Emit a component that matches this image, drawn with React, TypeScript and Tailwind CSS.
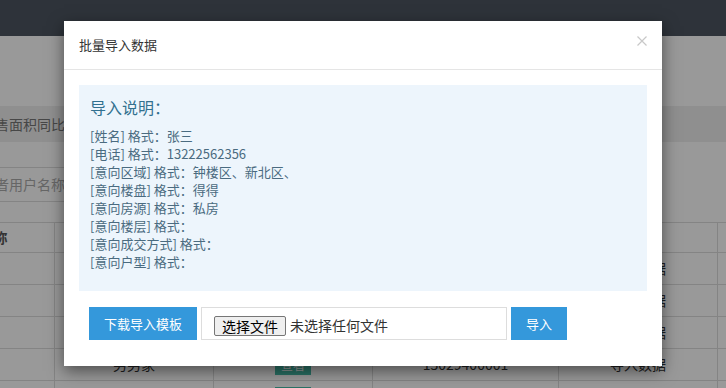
import React from 'react';

const rules = [
  '[姓名] 格式：张三',
  '[电话] 格式：13222562356',
  '[意向区域] 格式：钟楼区、新北区、',
  '[意向楼盘] 格式：得得',
  '[意向房源] 格式：私房',
  '[意向楼层] 格式：',
  '[意向成交方式] 格式：',
  '[意向户型] 格式：',
];

const headers = ['用户名称', '真实姓名', '头像', '手机号', '来源', '操作'];

const rows = [
  { name: '张三', real: '李四', phone: '13222562356', from: '导入数据' },
  { name: '王五', real: '赵六', phone: '13800000001', from: '导入数据' },
  { name: '小明', real: '刘备', phone: '13900000002', from: '导入数据' },
  { name: '家家', real: '男男家', phone: '15029400001', from: '导入数据' },
  { name: '陈七', real: '周八', phone: '15029400002', from: '导入数据' },
];

const widths = ['w-[150px]', 'w-[159px]', 'w-[159px]', 'w-[186px]', 'w-[159px]', 'w-[120px]'];

function PageBehind() {
  return (
    <div className="flex flex-col">
      <header className="h-[36px] bg-[#4e5562]" />
      <div className="h-[70px]" />
      <div className="h-[36px] bg-[#eeeeee] flex items-center">
        <span className="-ml-[19px] text-[14px] text-[#777]">销售面积同比分析</span>
      </div>
      <div className="h-[80px] pt-[25px]">
        <div className="-ml-[88px] w-[330px] h-[35px] border border-[#ddd] flex items-center pl-[12px] text-[14px] text-[#aaa]">
          请输入推荐者用户名称
        </div>
      </div>
      <div className="-ml-[95px] flex flex-col">
        <div className="flex h-[30px] border-t border-[#ddd]">
          {headers.map((h, i) => (
            <div key={h} className={`${widths[i]} shrink-0 border-r border-[#ddd] flex items-center justify-center text-[14px] font-bold text-[#555]`}>
              {h}
            </div>
          ))}
        </div>
        {rows.map((r) => (
          <div key={r.phone} className="flex h-[32px] border-t border-[#ddd] text-[14px] text-[#333]">
            <div className={`${widths[0]} shrink-0 border-r border-[#ddd] flex items-center justify-center`}>{r.name}</div>
            <div className={`${widths[1]} shrink-0 border-r border-[#ddd] flex items-center justify-center`}>{r.real}</div>
            <div className={`${widths[2]} shrink-0 border-r border-[#ddd] flex items-center justify-center`}>
              <span className="h-[20px] px-[6px] bg-[#47bda9] text-white text-[12px] leading-[20px]">查看</span>
            </div>
            <div className={`${widths[3]} shrink-0 border-r border-[#ddd] flex items-center justify-center`}>{r.phone}</div>
            <div className={`${widths[4]} shrink-0 border-r border-[#ddd] flex items-center justify-center`}>{r.from}</div>
            <div className={`${widths[5]} shrink-0 border-r border-[#ddd]`} />
          </div>
        ))}
      </div>
    </div>
  );
}

function ImportModal() {
  return (
    <div className="absolute left-[64px] top-[21px] w-[598px] bg-white shadow-[0_5px_15px_rgba(0,0,0,0.5)]">
      <div className="h-[49px] border-b border-[#e5e5e5] px-[15px] flex items-center justify-between">
        <h4 className="text-[13px] text-[#333]">批量导入数据</h4>
        <button className="mb-[8px] text-[#c8c8c8]" aria-label="关闭">
          <svg width="10" height="10" viewBox="0 0 10 10" fill="none" stroke="currentColor" strokeWidth="1.2">
            <path d="M0.5 0.5L9.5 9.5M9.5 0.5L0.5 9.5" />
          </svg>
        </button>
      </div>
      <div className="px-[15px] pt-[15px] pb-[26px]">
        <div className="bg-[#edf5fc] pt-[11px] pb-[20px] px-[11px]">
          <h3 className="text-[16px] leading-[22px] text-[#31708f]">导入说明：</h3>
          <ul className="mt-[9px] text-[13px] leading-[18px] text-[#4a6b80]">
            {rules.map((t) => (
              <li key={t}>{t}</li>
            ))}
          </ul>
        </div>
        <div className="mt-[16px] pl-[10px] flex items-center gap-[4px]">
          <button className="w-[108px] h-[33px] bg-[#3498db] text-white text-[13px]">下载导入模板</button>
          <label className="w-[306px] h-[33px] border border-[#ddd] flex items-center pl-[12px] pt-[4px] text-[14px] text-[#333]">
            <input type="file" className="hidden" />
            <span className="h-[20px] px-[7px] bg-[#efefef] border border-[#767676] rounded-[2px] text-[14px] leading-[18px] text-black">
              选择文件
            </span>
            <span className="ml-[4px]">未选择任何文件</span>
          </label>
          <button className="w-[56px] h-[33px] bg-[#3498db] text-white text-[13px]">导入</button>
        </div>
      </div>
    </div>
  );
}

export default function App() {
  return (
    <div className="relative w-[726px] h-[388px] overflow-hidden bg-white font-['Noto_Sans_CJK_SC','Noto_Sans',sans-serif]">
      <PageBehind />
      <div className="absolute inset-0 bg-black/40" />
      <ImportModal />
    </div>
  );
}
